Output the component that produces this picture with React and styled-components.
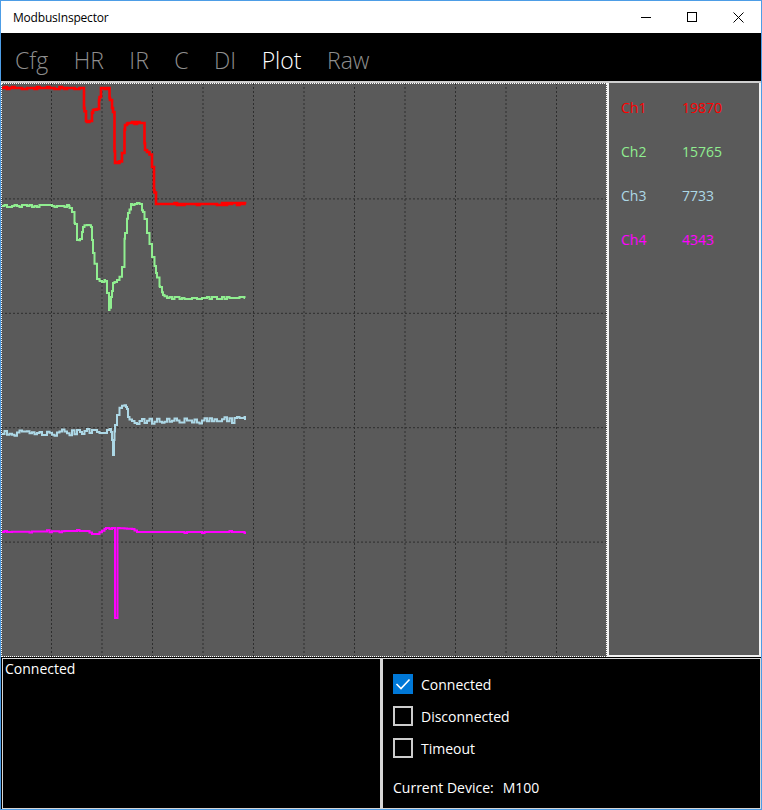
import React from 'react'
import styled, { createGlobalStyle } from 'styled-components'

const GlobalStyle = createGlobalStyle`
  html, body {
    margin: 0;
    padding: 0;
    background: #ffffff;
  }
  * {
    box-sizing: border-box;
  }
`;

const tabs = ['Cfg', 'HR', 'IR', 'C', 'DI', 'Plot', 'Raw'];

const channels = [
  { name: 'Ch1', value: 19870, color: '#ff0000' },
  { name: 'Ch2', value: 15765, color: '#90ee90' },
  { name: 'Ch3', value: 7733, color: '#add8e6' },
  { name: 'Ch4', value: 4343, color: '#ff00ff' },
];

const statuses = [
  { label: 'Connected', checked: true },
  { label: 'Disconnected', checked: false },
  { label: 'Timeout', checked: false },
];

// key points of each trace in plot pixels, plus how much the signal wobbles
const traces = [
  {
    color: '#ff0000', width: 2.6, noise: 1, seed: 7,
    keys: [[2, 88], [82, 88], [84, 108], [86, 121], [90, 121], [93, 110], [97, 109], [99, 100], [101, 88],
      [107, 88], [110, 100], [113, 112], [115, 163], [119, 163], [122, 153], [125, 125], [128, 123],
      [143, 123], [145, 150], [149, 152], [152, 167], [154, 190], [156, 204], [245, 204]],
  },
  {
    color: '#90ee90', width: 2, noise: 1.4, seed: 21,
    keys: [[2, 206], [69, 206], [72, 212], [75, 224], [77, 240], [80, 239], [83, 227], [87, 225], [91, 227],
      [93, 253], [97, 279], [100, 281], [105, 281], [107, 293], [109, 310], [111, 297], [113, 283],
      [117, 280], [119, 280], [122, 267], [125, 233], [128, 213], [131, 204], [140, 204], [143, 212],
      [147, 233], [152, 257], [156, 273], [160, 287], [163, 295], [167, 298], [245, 298]],
  },
  {
    color: '#add8e6', width: 2, noise: 3, seed: 43,
    keys: [[2, 434], [80, 432], [111, 432], [112, 440], [113, 455], [114, 440], [115, 425], [117, 415],
      [121, 408], [126, 407], [128, 417], [132, 421], [245, 420]],
  },
  {
    color: '#ff00ff', width: 2, noise: 0.6, seed: 5,
    keys: [[2, 532], [72, 531], [87, 531], [92, 534], [97, 534], [106, 528], [114.5, 528], [115, 618],
      [117, 618], [117.5, 528], [132, 529], [137, 532], [245, 532]],
  },
];

function rng(seed) {
  let s = seed;
  return () => {
    s = (s * 16807) % 2147483647;
    return s / 2147483647;
  };
}

function stepPath({ keys, noise, seed }) {
  const rand = rng(seed);
  const xs = new Set(keys.map(k => k[0]));
  for (let x = 2; x <= 245; x += 2.5) xs.add(x);
  const sorted = [...xs].sort((a, b) => a - b);
  const isKey = x => keys.some(k => k[0] === x);
  const at = x => {
    for (let i = 0; i < keys.length - 1; i++) {
      const [x0, y0] = keys[i];
      const [x1, y1] = keys[i + 1];
      if (x >= x0 && x <= x1) return y0 + (y1 - y0) * ((x - x0) / (x1 - x0 || 1));
    }
    return keys[keys.length - 1][1];
  };
  let d = '';
  let prev = null;
  sorted.forEach(x => {
    let y = at(x);
    if (!isKey(x)) y += Math.round((rand() * 2 - 1) * noise);
    if (prev === null) d += `M${x} ${y}`;
    else d += ` H${x} V${y}`;
    prev = y;
  });
  return d;
}

function Grid() {
  const cols = Array.from({ length: 11 }, (_, i) => 1 + (i + 1) * 50.5);
  const rows = Array.from({ length: 4 }, (_, i) => 84.5 + (i + 1) * 114.4);
  return (
    <g stroke="#2e2e2e" strokeWidth="1" strokeDasharray="2 2">
      {cols.map(x => <line key={x} x1={x} y1={83} x2={x} y2={657} />)}
      {rows.map(y => <line key={y} x1={1} y1={y} x2={607} y2={y} />)}
    </g>
  );
}

function App() {
  return (
    <>
      <GlobalStyle />
      <Window>
        <TitleBar>
          <Title>ModbusInspector</Title>
          <Controls>
            <ControlButton>
              <svg width="10" height="10" viewBox="0 0 10 10">
                <line x1="0" y1="5.5" x2="10" y2="5.5" stroke="#000" strokeWidth="1" />
              </svg>
            </ControlButton>
            <ControlButton>
              <svg width="10" height="10" viewBox="0 0 10 10">
                <rect x="0.5" y="0.5" width="9" height="9" fill="none" stroke="#000" strokeWidth="1" />
              </svg>
            </ControlButton>
            <ControlButton>
              <svg width="11" height="11" viewBox="0 0 11 11">
                <path d="M0.5 0.5 L10.5 10.5 M10.5 0.5 L0.5 10.5" stroke="#000" strokeWidth="1" />
              </svg>
            </ControlButton>
          </Controls>
        </TitleBar>

        <NavBar>
          {tabs.map(t => (
            <Tab key={t} active={t === 'Plot'}>{t}</Tab>
          ))}
        </NavBar>

        <Main>
          <PlotArea>
            <svg width="606" height="574" viewBox="1 83 606 574">
              <Grid />
              {traces.map(tr => (
                <path key={tr.color} d={stepPath(tr)} fill="none" stroke={tr.color}
                  strokeWidth={tr.width} strokeLinejoin="miter" />
              ))}
            </svg>
          </PlotArea>
          <Legend>
            {channels.map(c => (
              <LegendRow key={c.name} color={c.color}>
                <ChName>{c.name}</ChName>
                <span>{c.value}</span>
              </LegendRow>
            ))}
          </Legend>
        </Main>

        <Bottom>
          <LogBox>Connected</LogBox>
          <StatusBox>
            {statuses.map(s => (
              <CheckRow key={s.label}>
                <Box checked={s.checked}>
                  {s.checked && (
                    <svg width="20" height="20" viewBox="0 0 20 20">
                      <polyline points="3.5,10 8,14.5 16.5,5.5" fill="none" stroke="#fff" strokeWidth="1.6" />
                    </svg>
                  )}
                </Box>
                {s.label}
              </CheckRow>
            ))}
            <DeviceRow>
              <span>Current Device:</span>
              <span>M100</span>
            </DeviceRow>
          </StatusBox>
        </Bottom>
      </Window>
    </>
  )
}

const Window = styled.div`
  width: 762px;
  height: 810px;
  border: 1px solid #4d9de6;
  display: flex;
  flex-direction: column;
  font-family: "Open Sans", "Noto Sans", sans-serif;
  background: #000;
`;

const TitleBar = styled.div`
  height: 32px;
  flex-shrink: 0;
  background: #ffffff;
  display: flex;
  align-items: center;
  justify-content: space-between;
  padding-left: 12px;
`;

const Title = styled.div`
  font-size: 12px;
  color: #000;
  letter-spacing: -0.2px;
`;

const Controls = styled.div`
  display: flex;
  height: 100%;
`;

const ControlButton = styled.div`
  width: 46px;
  height: 100%;
  display: flex;
  align-items: center;
  justify-content: center;
`;

const NavBar = styled.div`
  height: 50px;
  flex-shrink: 0;
  background: #000;
  border-bottom: 2px solid #cfcfcf;
  display: flex;
  align-items: center;
  gap: 25.5px;
  padding: 6px 0 0 14px;
`;

const Tab = styled.div`
  font-size: 23px;
  font-weight: 300;
  color: ${p => (p.active ? '#ffffff' : '#8e8e8e')};
`;

const Main = styled.div`
  height: 574px;
  flex-shrink: 0;
  display: flex;
  background: #5a5a5a;
`;

const PlotArea = styled.div`
  width: 606px;
  height: 100%;
  outline: 1px dotted #ffffff;
  outline-offset: -1px;

  svg {
    display: block;
  }
`;

const Legend = styled.div`
  flex: 1;
  border: 2px solid #f2f2f2;
  border-top: none;
  padding: 2px 0 0 12px;
`;

const LegendRow = styled.div`
  height: 44px;
  display: flex;
  align-items: center;
  font-size: 14px;
  color: ${p => p.color};
`;

const ChName = styled.span`
  width: 61px;
`;

const Bottom = styled.div`
  flex: 1;
  display: flex;
  padding: 1px 0 0 1px;
`;

const LogBox = styled.div`
  width: 379px;
  border: 1px solid #d6d6d6;
  color: #fff;
  font-size: 14px;
  padding: 1px 0 0 2px;
  line-height: 18px;
`;

const StatusBox = styled.div`
  flex: 1;
  border: 1px solid #d6d6d6;
  border-left-width: 2px;
  padding: 9px 0 0 10px;
  color: #fff;
  font-size: 14px;
`;

const CheckRow = styled.div`
  height: 32px;
  display: flex;
  align-items: center;
  gap: 8px;
`;

const Box = styled.div`
  width: 20px;
  height: 20px;
  border: ${p => (p.checked ? 'none' : '2px solid #cccccc')};
  background: ${p => (p.checked ? '#0078d7' : 'transparent')};
  display: flex;

  svg {
    display: block;
  }
`;

const DeviceRow = styled.div`
  height: 40px;
  display: flex;
  align-items: center;
  gap: 9px;
  padding-top: 6px;
`;

export default App
